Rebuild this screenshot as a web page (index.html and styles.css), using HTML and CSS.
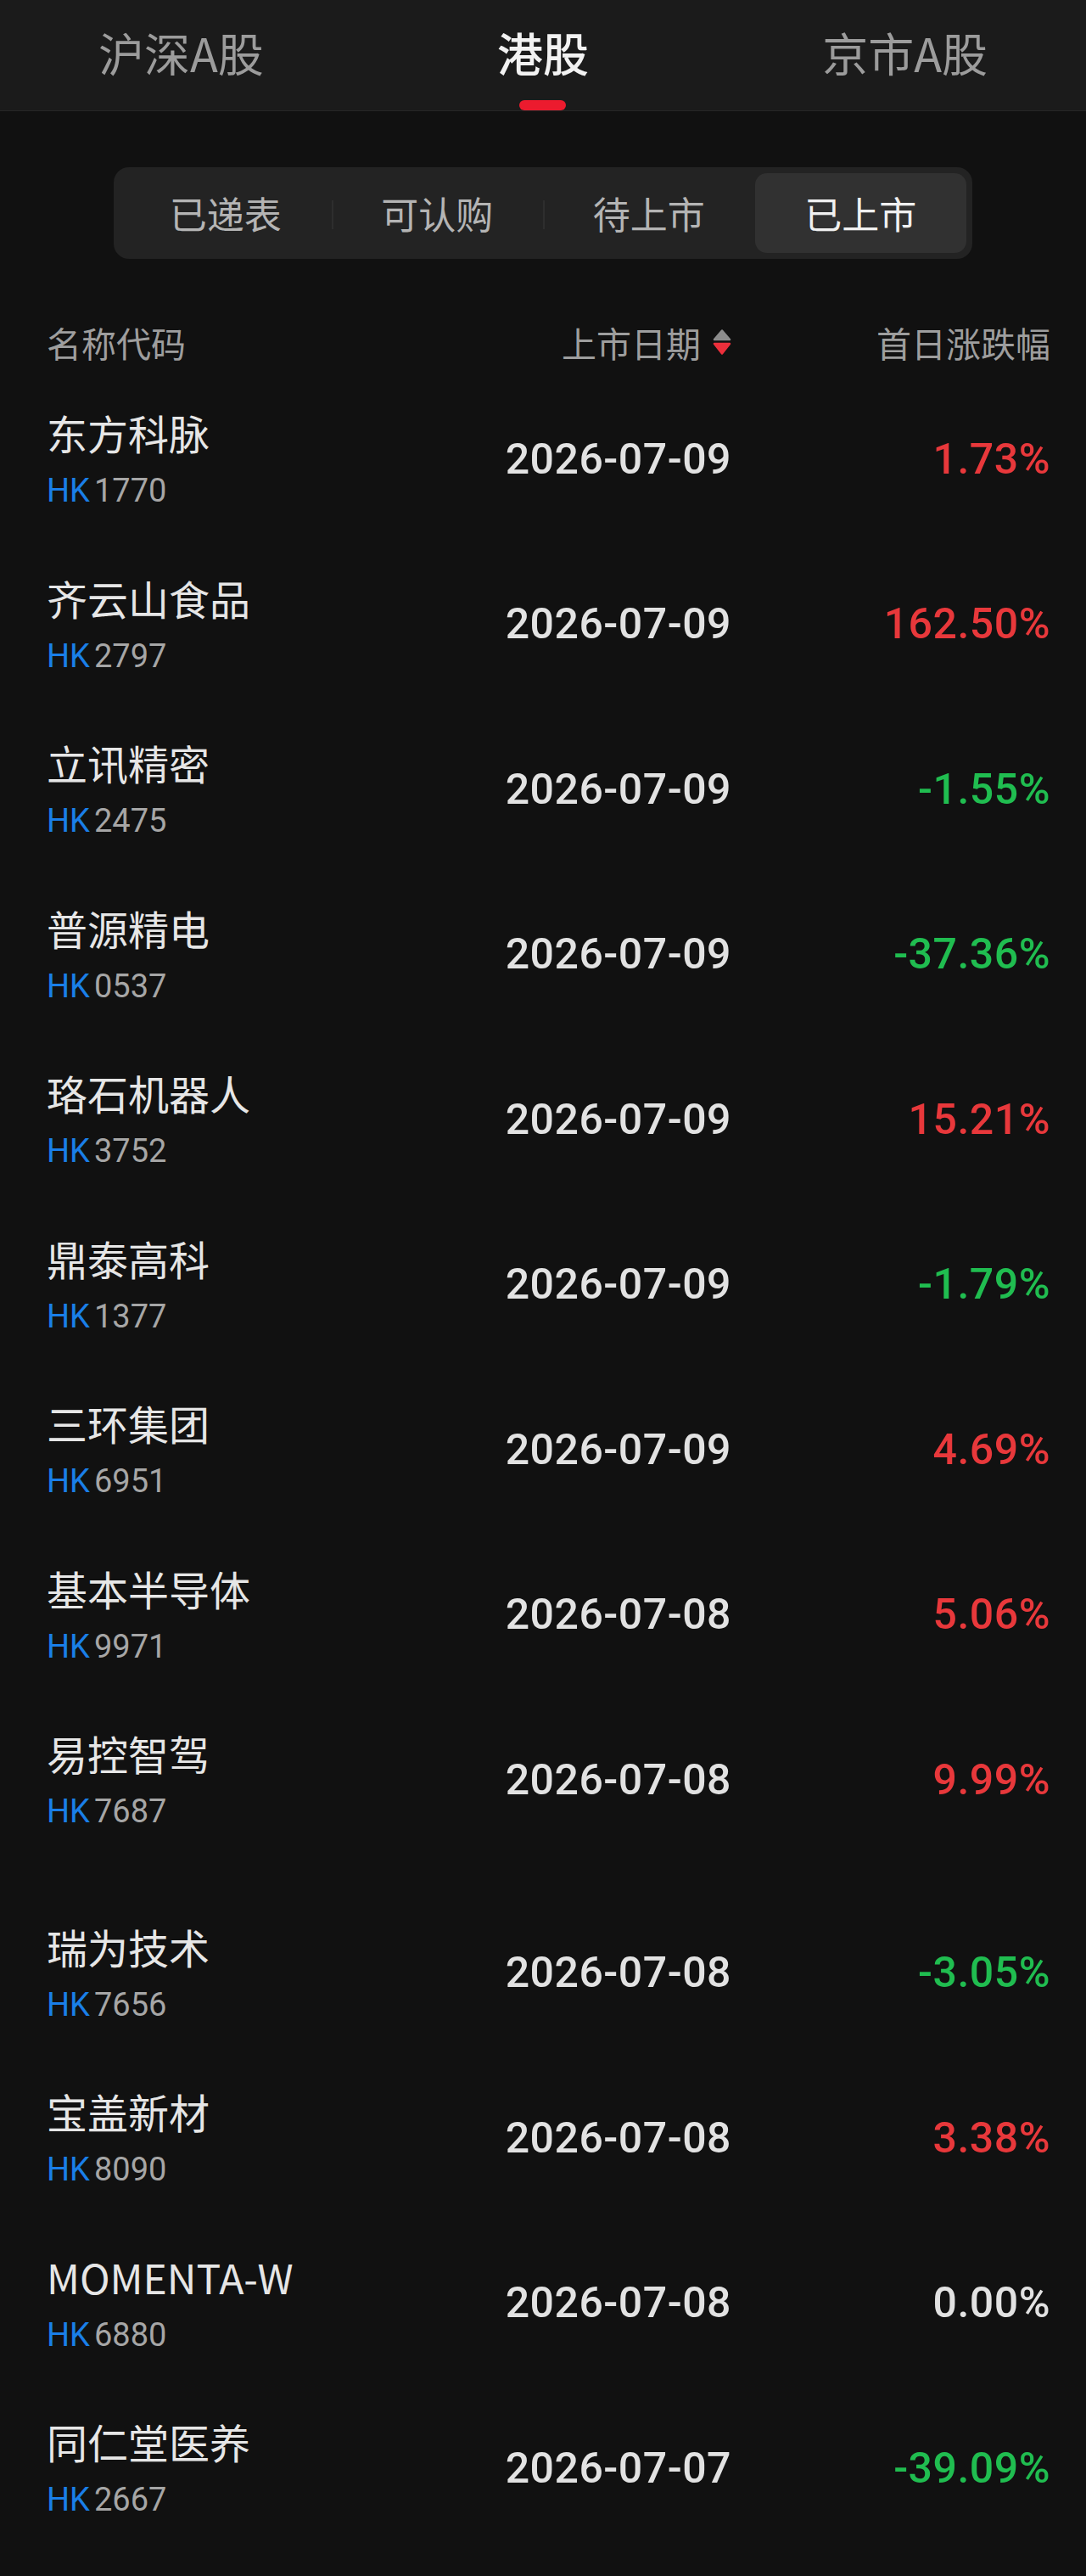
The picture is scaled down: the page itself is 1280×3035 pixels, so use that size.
FILE: index.html
```html
<!DOCTYPE html>
<html lang="zh-CN">
<head>
    <meta charset="UTF-8">
    <meta name="viewport" content="width=device-width, initial-scale=1.0">
    <title>新股日历 - 港股</title>
    <link rel="stylesheet" href="styles.css">
</head>
<body>
    <nav class="market-tabs">
        <div class="market-tab">沪深A股</div>
        <div class="market-tab active">港股<span class="tab-bar"></span></div>
        <div class="market-tab">京市A股</div>
    </nav>

    <div class="status-seg">
        <div class="seg-item">已递表</div>
        <div class="seg-item">可认购</div>
        <div class="seg-item">待上市</div>
        <div class="seg-item active">已上市</div>
    </div>

    <div class="list-head">
        <div>名称代码</div>
        <div class="col-date">上市日期
            <svg class="sort-icon" viewBox="0 0 22 30">
                <path d="M11 1.5 L20 12 H2 Z" fill="#8c8c8c" stroke="#8c8c8c" stroke-width="2.5" stroke-linejoin="round" />
                <path d="M2 17 H20 L11 28.5 Z" fill="#ec2f3b" stroke="#ec2f3b" stroke-width="2.5" stroke-linejoin="round" />
            </svg>
        </div>
        <div class="col-pct">首日涨跌幅</div>
    </div>

    <div class="ipo-list">
        <div class="ipo-row">
            <div class="stock"><div class="name">东方科脉</div><div class="code"><span class="mkt">HK</span>1770</div></div>
            <div class="date">2026-07-09</div>
            <div class="pct up">1.73%</div>
        </div>
        <div class="ipo-row">
            <div class="stock"><div class="name">齐云山食品</div><div class="code"><span class="mkt">HK</span>2797</div></div>
            <div class="date">2026-07-09</div>
            <div class="pct up">162.50%</div>
        </div>
        <div class="ipo-row">
            <div class="stock"><div class="name">立讯精密</div><div class="code"><span class="mkt">HK</span>2475</div></div>
            <div class="date">2026-07-09</div>
            <div class="pct down">-1.55%</div>
        </div>
        <div class="ipo-row">
            <div class="stock"><div class="name">普源精电</div><div class="code"><span class="mkt">HK</span>0537</div></div>
            <div class="date">2026-07-09</div>
            <div class="pct down">-37.36%</div>
        </div>
        <div class="ipo-row">
            <div class="stock"><div class="name">珞石机器人</div><div class="code"><span class="mkt">HK</span>3752</div></div>
            <div class="date">2026-07-09</div>
            <div class="pct up">15.21%</div>
        </div>
        <div class="ipo-row">
            <div class="stock"><div class="name">鼎泰高科</div><div class="code"><span class="mkt">HK</span>1377</div></div>
            <div class="date">2026-07-09</div>
            <div class="pct down">-1.79%</div>
        </div>
        <div class="ipo-row">
            <div class="stock"><div class="name">三环集团</div><div class="code"><span class="mkt">HK</span>6951</div></div>
            <div class="date">2026-07-09</div>
            <div class="pct up">4.69%</div>
        </div>
        <div class="ipo-row">
            <div class="stock"><div class="name">基本半导体</div><div class="code"><span class="mkt">HK</span>9971</div></div>
            <div class="date">2026-07-08</div>
            <div class="pct up">5.06%</div>
        </div>
        <div class="ipo-row page-end">
            <div class="stock"><div class="name">易控智驾</div><div class="code"><span class="mkt">HK</span>7687</div></div>
            <div class="date">2026-07-08</div>
            <div class="pct up">9.99%</div>
        </div>
        <div class="ipo-row">
            <div class="stock"><div class="name">瑞为技术</div><div class="code"><span class="mkt">HK</span>7656</div></div>
            <div class="date">2026-07-08</div>
            <div class="pct down">-3.05%</div>
        </div>
        <div class="ipo-row">
            <div class="stock"><div class="name">宝盖新材</div><div class="code"><span class="mkt">HK</span>8090</div></div>
            <div class="date">2026-07-08</div>
            <div class="pct up">3.38%</div>
        </div>
        <div class="ipo-row">
            <div class="stock"><div class="name">MOMENTA-W</div><div class="code"><span class="mkt">HK</span>6880</div></div>
            <div class="date">2026-07-08</div>
            <div class="pct flat">0.00%</div>
        </div>
        <div class="ipo-row">
            <div class="stock"><div class="name">同仁堂医养</div><div class="code"><span class="mkt">HK</span>2667</div></div>
            <div class="date">2026-07-07</div>
            <div class="pct down">-39.09%</div>
        </div>
    </div>
</body>
</html>
```

FILE: styles.css
```css
body, html {
    margin: 0;
    padding: 0;
    background: #111111;
    font-family: "Noto Sans CJK SC", "Noto Sans", sans-serif;
    color: #e4e4e4;
}

/* market switch at the top */
.market-tabs {
    display: grid;
    grid-template-columns: repeat(3, 1fr);
    height: 130px;
    background: #1b1b1b;
    border-bottom: 1px solid #262626;
}
.market-tab {
    display: flex;
    flex-direction: column;
    align-items: center;
    padding-top: 26px;
    font-size: 54px;
    line-height: 72px;
    color: #9c9c9c;
}
.market-tab.active {
    color: #f2f2f2;
    font-weight: 500;
}
.tab-bar {
    width: 55px;
    height: 12px;
    margin-top: 20px;
    border-radius: 6px;
    background: #ec1b2e;
}

/* listing status segmented control */
.status-seg {
    display: flex;
    height: 108px;
    margin: 66px 134px 0;
    padding: 7px;
    box-sizing: border-box;
    border-radius: 18px;
    background: #232323;
}
.seg-item {
    flex: 1;
    position: relative;
    display: flex;
    align-items: center;
    justify-content: center;
    font-size: 44px;
    color: #b4b4b4;
    border-radius: 14px;
}
.seg-item:not(.active) + .seg-item:not(.active)::before {
    content: "";
    position: absolute;
    left: 0;
    top: 32px;
    width: 2px;
    height: 34px;
    background: #2e2e2e;
}
.seg-item.active {
    background: #313131;
    color: #f0f0f0;
}

/* table */
.list-head, .ipo-row {
    display: grid;
    grid-template-columns: 1fr 320px 376px;
    align-items: center;
    padding: 0 42px 0 55px;
}
.list-head {
    height: 80px;
    margin-top: 58px;
    font-size: 41px;
    color: #9e9e9e;
}
.col-date, .col-pct {
    justify-self: end;
}
.col-date {
    display: flex;
    align-items: center;
}
.sort-icon {
    width: 22px;
    height: 30px;
    margin-left: 14px;
}

.ipo-row {
    padding-top: 36px;
    padding-bottom: 35.5px;
}
.ipo-row.page-end {
    margin-bottom: 33px;
}
.name {
    font-size: 48px;
    line-height: 60px;
    color: #e6e6e6;
}
.code {
    margin-top: 15px;
    font-family: Roboto, "Noto Sans", sans-serif;
    font-size: 38px;
    line-height: 48px;
    color: #a6a6a6;
}
.mkt {
    color: #1a7fe8;
    margin-right: 5px;
}
.date, .pct {
    justify-self: end;
    font-family: Roboto, "Noto Sans", sans-serif;
    font-size: 50px;
    font-weight: 500;
    letter-spacing: 0.5px;
}
.date {
    color: #e2e2e2;
}
.pct.up {
    color: #e8383b;
}
.pct.down {
    color: #20bd50;
}
.pct.flat {
    color: #e2e2e2;
}
```
